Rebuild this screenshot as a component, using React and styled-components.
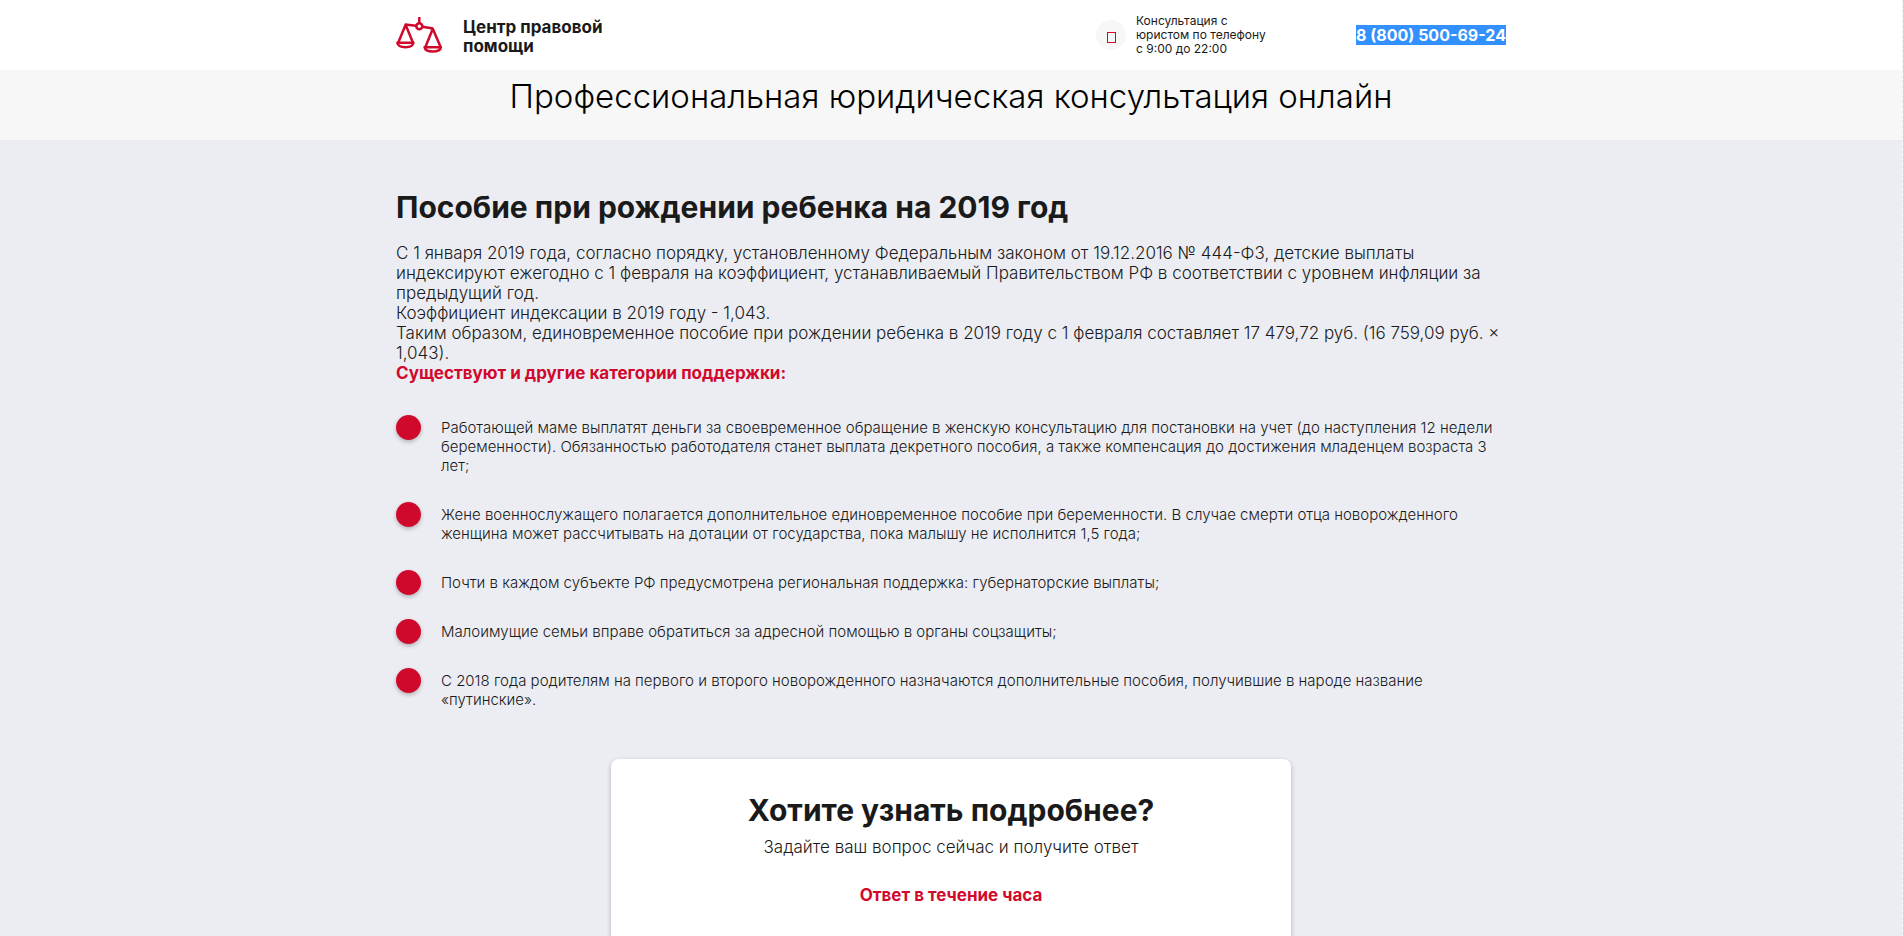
import React, {Fragment} from "react"
import styled, {createGlobalStyle} from "styled-components"

const GlobalStyle = createGlobalStyle`
  * {
    box-sizing: border-box;
  }
  body {
    margin: 0;
    background: #fff;
    color: #1a1a1a;
    font-family: Inter, "Noto Sans", sans-serif;
    font-size: 17px;
    font-weight: 300;
    line-height: 20px;
  }
  h1, h2, p, ul {
    margin: 0;
    padding: 0;
  }
`

/* ---------- layout ---------- */

const Page = styled.div`
  min-height: 100vh;
  border-right: 1px dashed #ecedf3;
`

const Container = styled.div`
  max-width: 1140px;
  margin: 0 auto;
  padding: 0 15px;
`

const Header = styled.header`
  background: #fff;
`

const HeaderRow = styled(Container)`
  display: flex;
  align-items: center;
  justify-content: space-between;
  min-height: 70px;
`

const Contacts = styled.div`
  display: flex;
  align-items: center;
  justify-content: space-between;
  flex: 0 1 410px;
`

const Banner = styled.section`
  min-height: 70px;
  padding: 8px 15px;
  background: #f7f7f7;
`

const Main = styled.main`
  padding: 50px 0;
  background: #ecedf3;
`

/* ---------- header ---------- */

const Logo = styled.a`
  display: flex;
  align-items: center;
  gap: 20px;
  color: #1a1a1a;
  font-weight: 700;
  line-height: 19px;
  text-decoration: none;
`

const LogoText = styled.span`
  padding-top: 3px;
`

const Consult = styled.div`
  display: flex;
  align-items: center;
  gap: 10px;
  font-size: 12px;
  font-weight: 400;
  line-height: 14px;
`

const PhoneIcon = styled.span`
  display: flex;
  align-items: flex-end;
  justify-content: center;
  width: 30px;
  height: 30px;
  padding-bottom: 7px;
  border-radius: 50%;
  background: #f7f7f7;
`

const Phone = styled.a`
  background: #3390ff;
  color: #fff;
  font-size: 16px;
  font-weight: 700;
  text-decoration: none;
  white-space: nowrap;
`

/* ---------- text ---------- */

const BannerTitle = styled.h1`
  font-size: 33px;
  font-weight: 300;
  line-height: 37px;
  text-align: center;
  color: #000;
`

const Title = styled.h2`
  font-size: 30px;
  font-weight: 700;
  line-height: 34px;
`

const Article = styled.div`
  margin-top: 19px;
`

const Accent = styled.p`
  color: #d0092c;
  font-weight: 700;
`

const List = styled.ul`
  display: flex;
  flex-direction: column;
  gap: 24px;
  margin-top: 32px;
  list-style: none;
`

const Item = styled.li`
  display: flex;
  align-items: flex-start;
  gap: 20px;
  font-size: 15px;
  line-height: 19px;

  &::before {
    content: "";
    flex: none;
    width: 25px;
    height: 25px;
    border-radius: 50%;
    background: #d0092c;
    box-shadow: 0 2px 4px rgba(0, 0, 0, 0.25);
  }
`

const ItemText = styled.span`
  padding: 3px 0;
`

/* ---------- question card ---------- */

const Card = styled.section`
  max-width: 680px;
  margin: 47px auto 0;
  padding: 34px 30px 60px;
  border-radius: 8px;
  background: #fff;
  box-shadow: 0 2px 5px rgba(0, 0, 0, 0.25);
  text-align: center;

  p {
    margin-top: 10px;
  }
  ${Accent} {
    margin-top: 28px;
  }
`

const items = [
  "Работающей маме выплатят деньги за своевременное обращение в женскую консультацию для постановки на учет (до наступления 12 недели беременности). Обязанностью работодателя станет выплата декретного пособия, а также компенсация до достижения младенцем возраста 3 лет;",
  "Жене военнослужащего полагается дополнительное единовременное пособие при беременности. В случае смерти отца новорожденного женщина может рассчитывать на дотации от государства, пока малышу не исполнится 1,5 года;",
  "Почти в каждом субъекте РФ предусмотрена региональная поддержка: губернаторские выплаты;",
  "Малоимущие семьи вправе обратиться за адресной помощью в органы соцзащиты;",
  "С 2018 года родителям на первого и второго новорожденного назначаются дополнительные пособия, получившие в народе название «путинские».",
]

const Scales = () => (
  <svg width="47" height="36" viewBox="0 0 47 36" fill="none" stroke="#d0092c" strokeWidth="2.5" aria-hidden="true">
    <path d="M23.3 0V6M9 7.6L20 8.8M26.5 9.8L37 11.6" />
    <circle cx="23.3" cy="9.3" r="3" />
    <path d="M2.2 25.8L9.6 7.8L17 25.8M29.4 30L36.8 11.8L44.6 30" strokeLinejoin="round" />
    <path d="M1.4 25.8H17.4C16.6 31.6 2.2 31.6 1.4 25.8ZM28.6 30.2H44.9C44 36 29.5 36 28.6 30.2Z" strokeLinejoin="round" />
  </svg>
)

const App = () => {
  return (
    <Fragment>
      <GlobalStyle />
      <Page>
        <Header>
          <HeaderRow>
            <Logo href="#">
              <Scales />
              <LogoText>Центр правовой<br />помощи</LogoText>
            </Logo>
            <Contacts>
              <Consult>
                <PhoneIcon>
                  <svg width="9" height="11" viewBox="0 0 9 11" fill="none" stroke="#d0092c" aria-hidden="true">
                    <rect x="0.5" y="0.5" width="8" height="10" />
                  </svg>
                </PhoneIcon>
                <span>Консультация с<br />юристом по телефону<br />с 9:00 до 22:00</span>
              </Consult>
              <Phone href="tel:88005006924">8 (800) 500-69-24</Phone>
            </Contacts>
          </HeaderRow>
        </Header>
        <Banner>
          <BannerTitle>Профессиональная юридическая консультация онлайн</BannerTitle>
        </Banner>
        <Main>
          <Container>
            <Title>Пособие при рождении ребенка на 2019 год</Title>
            <Article>
              <p>
                С 1 января 2019 года, согласно порядку, установленному Федеральным законом от 19.12.2016 № 444-ФЗ, детские выплаты индексируют ежегодно с 1 февраля на коэффициент, устанавливаемый Правительством РФ в соответствии с уровнем инфляции за предыдущий год.
              </p>
              <p>Коэффициент индексации в 2019 году - 1,043.</p>
              <p>
                Таким образом, единовременное пособие при рождении ребенка в 2019 году с 1 февраля составляет 17 479,72 руб. (16 759,09 руб. × 1,043).
              </p>
              <Accent>Существуют и другие категории поддержки:</Accent>
            </Article>
            <List>
              {
                items.map(text => {
                  return <Item key={text}><ItemText>{text}</ItemText></Item>
                })
              }
            </List>
            <Card>
              <Title>Хотите узнать подробнее?</Title>
              <p>Задайте ваш вопрос сейчас и получите ответ</p>
              <Accent>Ответ в течение часа</Accent>
            </Card>
          </Container>
        </Main>
      </Page>
    </Fragment>
  )
}

export default App
